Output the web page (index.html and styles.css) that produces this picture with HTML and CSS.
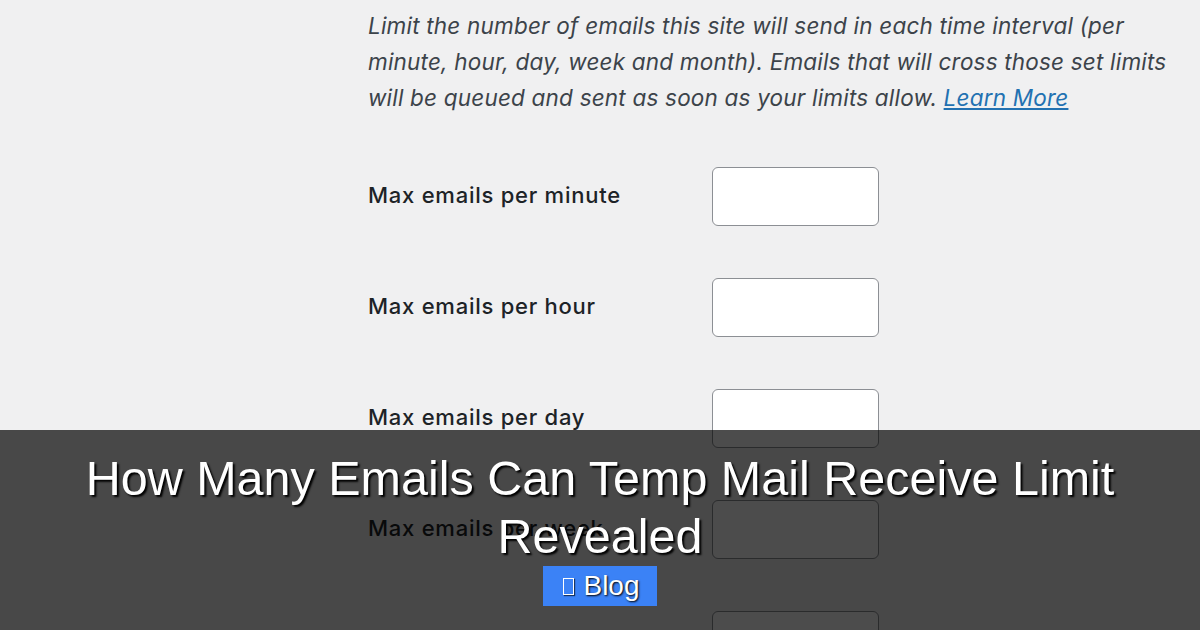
FILE: index.html
```html
<!DOCTYPE html>
<html lang="en">
<head>
  <meta charset="UTF-8" />
  <meta name="viewport" content="width=device-width, initial-scale=1.0" />
  <title>How Many Emails Can Temp Mail Receive Limit Revealed</title>
  <link rel="stylesheet" href="styles.css">
</head>
<body>

  <!-- SETTINGS PANEL -->
  <div class="wrap">
    <p class="description">
      Limit the number of emails this site will send in each time interval (per minute, hour, day, week and month). Emails that will cross those set limits will be queued and sent as soon as your limits allow. <a href="#">Learn More</a>
    </p>

    <div class="form-table">
      <label for="per-minute">Max emails per minute</label>
      <input type="number" id="per-minute" />

      <label for="per-hour">Max emails per hour</label>
      <input type="number" id="per-hour" />

      <label for="per-day">Max emails per day</label>
      <input type="number" id="per-day" />

      <label for="per-week">Max emails per week</label>
      <input type="number" id="per-week" />

      <label for="per-month">Max emails per month</label>
      <input type="number" id="per-month" />
    </div>
  </div>

  <!-- TITLE BAND -->
  <div class="banner">
    <h1>How Many Emails Can Temp Mail Receive Limit Revealed</h1>
    <span class="tag"><span class="tag-icon"></span>Blog</span>
  </div>

</body>
</html>
```

FILE: styles.css
```css
body {
  margin: 0;
  background: #f0f0f1;
  font-family: Inter, "Noto Sans", sans-serif;
  color: #1d2327;
  height: 630px;
  overflow: hidden;
  position: relative;
}

.wrap {
  margin-left: 368px;
  padding-top: 8px;
}

.description {
  margin: 0;
  width: 805px;
  font-size: 22.5px;
  line-height: 36px;
  letter-spacing: 0.2px;
  font-style: italic;
  color: #3c434a;
}

.description a {
  color: #2271b1;
}

.form-table {
  margin-top: 51px;
  display: grid;
  grid-template-columns: 344px 167px;
  row-gap: 52px;
  align-items: center;
}

.form-table label {
  font-size: 22px;
  font-weight: 500;
  letter-spacing: 0.75px;
  margin-top: -3px;
}

.form-table input {
  width: 167px;
  height: 59px;
  box-sizing: border-box;
  border: 1px solid #8c8f94;
  border-radius: 6px;
  background: #fff;
}

/* dark band along the bottom */
.banner {
  position: absolute;
  left: 0;
  right: 0;
  bottom: 0;
  height: 200px;
  background: rgba(0, 0, 0, 0.7);
  text-align: center;
  padding-top: 19px;
  box-sizing: border-box;
}

.banner h1 {
  margin: 0 auto;
  width: 1100px;
  font-family: "Liberation Sans", Arial, sans-serif;
  font-weight: normal;
  font-size: 48.5px;
  line-height: 58px;
  color: #fff;
  text-shadow: 2px 2px 2px #000;
}

.tag {
  display: inline-flex;
  align-items: center;
  gap: 9px;
  margin-top: 1px;
  height: 40px;
  padding: 0 17px 0 20px;
  background: #3b82f6;
  color: #fff;
  font-family: "Liberation Sans", Arial, sans-serif;
  font-size: 28px;
  text-shadow: 1px 1px 2px #000;
}

.tag-icon {
  width: 9px;
  height: 15px;
  border: 1px solid #fff;
  box-shadow: 1px 1px 1px rgba(0, 0, 0, 0.6);
}
```
